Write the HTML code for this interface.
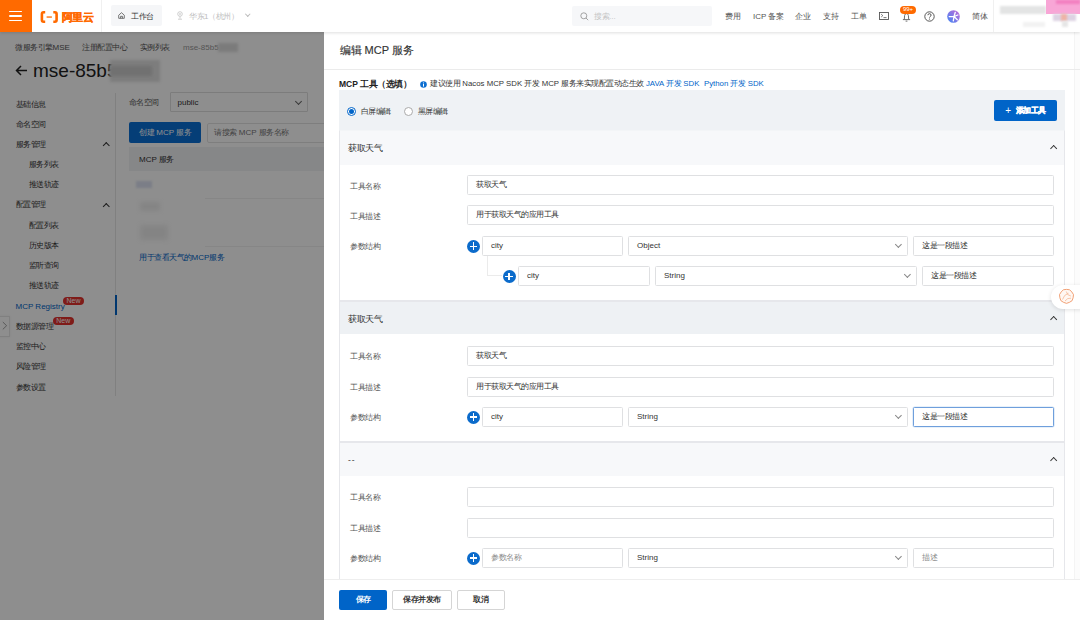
<!DOCTYPE html>
<html><head><meta charset="utf-8">
<style>
*{box-sizing:border-box;margin:0;padding:0}
html,body{width:1080px;height:620px;overflow:hidden;background:#fff;font-family:"Liberation Sans",sans-serif;color:#333;font-size:8px;line-height:1}
.a{position:absolute;white-space:nowrap}
.c{letter-spacing:-0.5px}
.nols .c{letter-spacing:0}
/* header */
#hdr{position:absolute;left:0;top:0;width:1080px;height:32px;background:#fff;box-shadow:0 1px 3px rgba(0,0,0,0.13);z-index:5}
.hm{position:absolute;left:0;top:0;width:32px;height:32px;background:#ff6a00}
.hm i{position:absolute;left:9px;width:13px;height:1.6px;background:#fff;border-radius:1px}
.ht{font-size:8px;color:#555}
/* page */
#page{position:absolute;left:0;top:32px;width:1080px;height:588px;background:#fff}
.side{font-size:8px;color:#333}
#mask{position:absolute;left:0;top:32px;width:1080px;height:588px;background:rgba(0,0,0,0.445);z-index:3}
#drawer{position:absolute;left:324px;top:32px;width:756px;height:588px;background:#fff;z-index:4}
.inp{position:absolute;height:20px;border:1px solid #dfe0e2;border-radius:1.5px;background:#fff;font-size:8px;color:#333;line-height:18.8px;padding-left:8px;white-space:nowrap}
.lbl{position:absolute;font-size:8px;color:#555;white-space:nowrap}
.plus{position:absolute;width:13px;height:13px;border-radius:50%;background:#0b6bcb}
.plus:before{content:"";position:absolute;left:2.7px;top:5.75px;width:7.6px;height:1.5px;background:#fff}
.plus:after{content:"";position:absolute;left:5.75px;top:2.7px;width:1.5px;height:7.6px;background:#fff}
.chev{position:absolute;width:5px;height:5px;border-right:1px solid #666;border-bottom:1px solid #666;transform:rotate(45deg)}
.chup{position:absolute;width:6px;height:6px;border-left:1.3px solid #333;border-top:1.3px solid #333;transform:rotate(45deg)}
.card{position:absolute;left:339px;width:726px;border:1px solid #e6e7eb;background:#fff}
.ch{position:absolute;left:0;top:0;width:100%;height:33px;background:#f6f7f9}
.btn{position:absolute;height:20px;border-radius:2px;font-size:8px;font-weight:bold;text-align:center;line-height:20px}
</style></head><body>

<div id="hdr">
  <div class="hm"><i style="top:10.5px"></i><i style="top:15.2px"></i><i style="top:19.9px"></i></div>
  <svg class="a" style="left:40px;top:10.5px" width="20" height="12" viewBox="0 0 20 12">
    <path d="M5.2 1.3 H3.6 Q1.9 1.3 1.9 3 V9 Q1.9 10.7 3.6 10.7 H5.2" fill="none" stroke="#ff6a00" stroke-width="2.6"/>
    <path d="M13.3 1.3 H14.9 Q16.6 1.3 16.6 3 V9 Q16.6 10.7 14.9 10.7 H13.3" fill="none" stroke="#ff6a00" stroke-width="2.6"/>
    <rect x="6.6" y="5.4" width="5.3" height="1.3" fill="#ff6a00"/>
  </svg>
  <div class="a" style="left:61.5px;top:9.5px;font-size:11px;font-weight:bold;color:#ff6a00;line-height:14px;-webkit-text-stroke:0.35px #ff6a00"><span class="c">阿里云</span></div>
  <div class="a" style="left:101px;top:0;width:1px;height:32px;background:#f0f0f0"></div>
  <div class="a" style="left:110.5px;top:5px;width:51px;height:20.5px;background:#f5f6f8;border-radius:2px"></div>
  <svg class="a" style="left:118px;top:12px" width="7" height="7" viewBox="0 0 7 7"><path d="M0.7 3.2 L3.5 0.7 L6.3 3.2 V6.3 H0.7 Z" fill="none" stroke="#555" stroke-width="0.8"/><path d="M2.6 6.3 V4.3 H4.4 V6.3" fill="none" stroke="#555" stroke-width="0.8"/></svg>
  <div class="a ht" style="left:131px;top:11.5px;color:#333;line-height:10px"><span class="c">工作台</span></div>
  <svg class="a" style="left:177px;top:11px" width="6" height="9" viewBox="0 0 6 9"><circle cx="3" cy="3" r="2.3" fill="none" stroke="#bbb" stroke-width="0.7"/><circle cx="3" cy="3" r="0.8" fill="#bbb"/><path d="M3 5.4 V7.6 M1 8.2 H5" stroke="#bbb" stroke-width="0.7"/></svg>
  <div class="a ht" style="left:189px;top:11.5px;color:#bdbdbd;line-height:10px"><span class="c">华东</span>1<span class="c">（杭州）</span></div>
  <div class="chev" style="left:246px;top:12px;width:3.5px;height:3.5px;border-color:#bbb"></div>
  <div class="a" style="left:572px;top:5.5px;width:140px;height:20.5px;background:#f6f7f9;border-radius:2px"></div>
  <svg class="a" style="left:580px;top:12px" width="9" height="9" viewBox="0 0 9 9"><circle cx="3.8" cy="3.8" r="3" fill="none" stroke="#999" stroke-width="0.9"/><path d="M6 6 L8.2 8.2" stroke="#999" stroke-width="0.9"/></svg>
  <div class="a ht" style="left:594px;top:11.5px;color:#c4c4c4;line-height:10px"><span class="c">搜索</span>...</div>
  <div class="a ht" style="left:725px;top:11.5px;line-height:10px"><span class="c">费用</span></div>
  <div class="a ht" style="left:753px;top:11.5px;line-height:10px">ICP <span class="c">备案</span></div>
  <div class="a ht" style="left:795px;top:11.5px;line-height:10px"><span class="c">企业</span></div>
  <div class="a ht" style="left:823px;top:11.5px;line-height:10px"><span class="c">支持</span></div>
  <div class="a ht" style="left:851px;top:11.5px;line-height:10px"><span class="c">工单</span></div>
  <svg class="a" style="left:879px;top:12px" width="10" height="8" viewBox="0 0 10 8"><rect x="0.5" y="0.5" width="9" height="7" fill="none" stroke="#555" stroke-width="0.9"/><path d="M2.2 2.2 L3.8 3.6 L2.2 5" fill="none" stroke="#555" stroke-width="0.8"/><path d="M4.5 5.6 H7.5" stroke="#555" stroke-width="0.8"/></svg>
  <svg class="a" style="left:902px;top:12px" width="9" height="10" viewBox="0 0 9 10"><path d="M2.3 7.4 L2.6 3.6 Q2.8 1.6 4.5 1.6 Q6.2 1.6 6.4 3.6 L6.7 7.4 M0.9 7.6 H8.1 M3.6 9.1 H5.4" fill="none" stroke="#555" stroke-width="0.85"/></svg>
  <div class="a" style="left:900px;top:6px;width:16px;height:7.5px;border-radius:4px;background:#ff6a00;color:#fff;font-size:6px;line-height:7.5px;text-align:center">99+</div>
  <svg class="a" style="left:923.5px;top:10.5px" width="11" height="11" viewBox="0 0 11 11"><circle cx="5.5" cy="5.5" r="4.7" fill="none" stroke="#444" stroke-width="0.9"/><path d="M3.9 4.2 Q3.9 2.7 5.5 2.7 Q7.1 2.7 7.1 4.1 Q7.1 5 6 5.6 Q5.5 5.9 5.5 6.6" fill="none" stroke="#444" stroke-width="0.9"/><circle cx="5.5" cy="8" r="0.6" fill="#444"/></svg>
  <svg class="a" style="left:946.5px;top:9.5px" width="13" height="13" viewBox="0 0 13 13"><defs><linearGradient id="av" x1="0" y1="1" x2="1" y2="0"><stop offset="0" stop-color="#3f86f5"/><stop offset="1" stop-color="#c86ad6"/></linearGradient></defs><circle cx="6.5" cy="6.5" r="6.3" fill="url(#av)"/><path d="M7 6.5 L2.2 6.6 M7 6.5 L8.3 2.3 M7 6.5 L10.9 5 M7 6.5 L10.3 9.8 M7 6.5 L6.3 10.9" stroke="#fff" stroke-width="1.3" stroke-linecap="round"/></svg>
  <div class="a ht" style="left:972px;top:11.5px;line-height:10px"><span class="c">简体</span></div>
  <div class="a" style="left:993px;top:0;width:1px;height:32px;background:#f0f0f0"></div>
  <div class="a" style="left:1000px;top:6px;width:46px;height:8px;background:#e3e4e4;filter:blur(0.8px)"></div>
  <div class="a" style="left:1046px;top:0;width:34px;height:14px;background:#f8a6d6;filter:blur(0.6px)"></div>
  <div class="a" style="left:1056px;top:0;width:24px;height:4px;background:#f27fc0;filter:blur(1px)"></div>
  <div class="a" style="left:1053px;top:14px;width:23px;height:7px;background:#ddd3e3;filter:blur(0.8px)"></div>
  <div class="a" style="left:1061px;top:14px;width:6px;height:7px;background:#eeb3a6;filter:blur(1px)"></div>
  <div class="a" style="left:1062px;top:21px;width:6px;height:6px;background:#e6e6e6;filter:blur(0.8px)"></div>
  <div class="a" style="left:1023px;top:22px;width:22px;height:5px;background:#f2f2f2;filter:blur(0.8px)"></div>
</div>

<div id="page">
  <div class="a side" style="left:15px;top:10.8px;line-height:10px;color:#555"><span class="c">微服务引擎</span>MSE</div>
  <div class="a side" style="left:82px;top:10.8px;line-height:10px;color:#555"><span class="c">注册配置中心</span></div>
  <div class="a side" style="left:139.5px;top:10.8px;line-height:10px;color:#555"><span class="c">实例列表</span></div>
  <div class="a side" style="left:183px;top:10.8px;line-height:10px;color:#999">mse-85b5</div>
  <div class="a" style="left:218px;top:11px;width:20px;height:9px;background:#ddd;filter:blur(1.5px)"></div>
  <svg class="a" style="left:15px;top:32px" width="13" height="13" viewBox="0 0 13 13"><path d="M12 6.5 H1.5 M6 2 L1.5 6.5 L6 11" fill="none" stroke="#222" stroke-width="1.5"/></svg>
  <div class="a" style="left:33px;top:27.5px;font-size:19px;line-height:22px;color:#222">mse-85b5</div>
  <div class="a" style="left:110px;top:28px;width:50px;height:22px;background:#e0e0e0;filter:blur(1.5px)"></div>
  <div class="a" style="left:110px;top:34px;width:42px;height:10px;background:#cbcbcb;filter:blur(1.5px)"></div>

  <div class="a side" style="left:15.5px;top:67.8px;line-height:10px"><span class="c">基础信息</span></div>
  <div class="a side" style="left:15.5px;top:87.8px;line-height:10px"><span class="c">命名空间</span></div>
  <div class="a side" style="left:15.5px;top:107.8px;line-height:10px"><span class="c">服务管理</span></div>
  <div class="chup" style="left:103.5px;top:110.8px;width:4.5px;height:4.5px;border-width:1px;border-color:#333"></div>
  <div class="a side" style="left:28.5px;top:127.8px;line-height:10px"><span class="c">服务列表</span></div>
  <div class="a side" style="left:28.5px;top:147.8px;line-height:10px"><span class="c">推送轨迹</span></div>
  <div class="a side" style="left:15.5px;top:168.3px;line-height:10px"><span class="c">配置管理</span></div>
  <div class="chup" style="left:103.5px;top:171.8px;width:4.5px;height:4.5px;border-width:1px;border-color:#333"></div>
  <div class="a side" style="left:28.5px;top:188.8px;line-height:10px"><span class="c">配置列表</span></div>
  <div class="a side" style="left:28.5px;top:208.8px;line-height:10px"><span class="c">历史版本</span></div>
  <div class="a side" style="left:28.5px;top:228.8px;line-height:10px"><span class="c">监听查询</span></div>
  <div class="a side" style="left:28.5px;top:248.8px;line-height:10px"><span class="c">推送轨迹</span></div>
  <div class="a side" style="left:15.5px;top:269.8px;line-height:10px;color:#0064c8">MCP Registry</div>
  <div class="a" style="left:63px;top:264.5px;width:21px;height:8.5px;border-radius:4.5px;background:#e5322d;color:#fff;font-size:7px;line-height:8.5px;text-align:center">New</div>
  <div class="a side" style="left:15.5px;top:290.3px;line-height:10px"><span class="c">数据源管理</span></div>
  <div class="a" style="left:53px;top:284.5px;width:20.5px;height:8.5px;border-radius:4.5px;background:#e5322d;color:#fff;font-size:7px;line-height:8.5px;text-align:center">New</div>
  <div class="a side" style="left:15.5px;top:310.3px;line-height:10px"><span class="c">监控中心</span></div>
  <div class="a side" style="left:15.5px;top:330.3px;line-height:10px"><span class="c">风险管理</span></div>
  <div class="a side" style="left:15.5px;top:350.8px;line-height:10px"><span class="c">参数设置</span></div>
  <div class="a" style="left:115px;top:61px;width:1px;height:303px;background:#e6e6e6"></div>
  <div class="a" style="left:114.5px;top:262.5px;width:2px;height:20.5px;background:#0064c8"></div>
  <div class="a" style="left:-1px;top:283.5px;width:10.7px;height:21px;border:1px solid #e6e6e6;background:#fff;box-shadow:0 0 2px rgba(0,0,0,0.08)"></div>
  <svg class="a" style="left:0;top:284px" width="10" height="20" viewBox="0 0 10 20"><path d="M2.8 6 L6.6 9.7 L2.8 13.4" fill="none" stroke="#888" stroke-width="0.8"/></svg>

  <div class="a side" style="left:128.5px;top:65.5px;line-height:10px;color:#555"><span class="c">命名空间</span></div>
  <div class="a" style="left:169.5px;top:60px;width:138px;height:20px;border:1px solid #dedede;border-radius:1px"></div>
  <div class="a side" style="left:177.5px;top:65.5px;line-height:10px">public</div>
  <div class="chev" style="left:296px;top:66.5px;width:5px;height:5px;border-color:#666;border-width:0.8px"></div>
  <div class="a" style="left:129px;top:90px;width:72px;height:20.5px;background:#0a6fd6;border-radius:2px"></div>
  <div class="a side" style="left:139px;top:95.5px;line-height:10px;color:#fff"><span class="c">创建</span> MCP <span class="c">服务</span></div>
  <div class="a" style="left:206.5px;top:90.5px;width:130px;height:20px;border:1px solid #e3e3e3;border-radius:2px"></div>
  <div class="a side" style="left:214px;top:95.5px;line-height:10px;color:#777"><span class="c">请搜索</span> MCP <span class="c">服务名称</span></div>
  <div class="a" style="left:129px;top:115px;width:200px;height:23.5px;background:#f0f2f5"></div>
  <div class="a side" style="left:139px;top:123px;line-height:10px;color:#333">MCP <span class="c">服务</span></div>
  <div class="a" style="left:136px;top:149px;width:16px;height:7px;background:#dde3f3;filter:blur(1.2px)"></div>
  <div class="a" style="left:140px;top:170px;width:20px;height:9px;background:#eee;filter:blur(2px)"></div>
  <div class="a" style="left:140px;top:193px;width:28px;height:15px;background:#eee;filter:blur(2.5px)"></div>
  <div class="a" style="left:205px;top:165.5px;width:124px;height:1px;background:#f0f0f0"></div>
  <div class="a" style="left:205px;top:213.5px;width:124px;height:1px;background:#f0f0f0"></div>
  <div class="a side" style="left:139px;top:220.5px;line-height:10px;color:#0064c8"><span class="c">用于查看天气的</span>MCP<span class="c">服务</span></div>
</div>
<div id="mask"></div>
<div id="drawer">
<div class="a" style="left:750px;top:0;width:6px;height:548px;background:#fcfcfc;border-left:1px solid #f4f4f4"></div>
<div class="a" style="left:0;top:0;width:756px;height:37.5px;border-bottom:1px solid #ebebeb"></div>
<div class="a nols" style="left:15.5px;top:11px;font-size:11px;line-height:14px;color:#333;-webkit-text-stroke:0.15px #333"><span class="c">编辑</span> MCP <span class="c">服务</span></div>
<div class="a" style="left:15px;top:47px;font-size:8.5px;line-height:10px;font-weight:bold;color:#222">MCP <span class="c">工具（选填）</span></div>
<svg class="a" style="left:95.5px;top:49.3px" width="7" height="7" viewBox="0 0 7 7"><circle cx="3.5" cy="3.5" r="3.3" fill="#0d6fd0"/><rect x="3" y="1.5" width="1" height="0.9" fill="#fff"/><rect x="3" y="3" width="1" height="2.6" fill="#fff"/></svg>
<div class="a" style="left:106px;top:47px;line-height:10px;color:#333;font-size:7.8px;word-spacing:0.1px"><span class="c">建议使用</span> Nacos MCP SDK <span class="c">开发</span> MCP <span class="c">服务来实现配置动态生效</span> <span style="color:#0064c8">JAVA <span class="c">开发</span> SDK</span>&nbsp; <span style="color:#0064c8">Python <span class="c">开发</span> SDK</span></div>
<div class="a" style="left:15px;top:58px;width:726px;height:490px;background:#eff2f5"></div>
<div class="a" style="left:22.5px;top:74.6px;width:9.2px;height:9.2px;border-radius:50%;border:1px solid #0064c8;background:#fff"></div>
<div class="a" style="left:24.6px;top:76.7px;width:5px;height:5px;border-radius:50%;background:#0064c8"></div>
<div class="lbl" style="left:36.5px;top:75px;line-height:10px;color:#333"><span class="c">白屏编辑</span></div>
<div class="a" style="left:79.5px;top:74.6px;width:9.2px;height:9.2px;border-radius:50%;border:1px solid #aaa;background:#fff"></div>
<div class="lbl" style="left:93.5px;top:75px;line-height:10px;color:#333"><span class="c">黑屏编辑</span></div>
<div class="btn" style="left:670px;top:68px;width:63px;height:20.5px;background:#0064c8;color:#fff"><span style="font-weight:normal;font-size:10px;position:relative;top:0.5px">+</span>&nbsp; <span style="-webkit-text-stroke:0.25px #fff"><span class="c">添加工具</span></span></div>
<div class="card" style="left:15px;top:98px;width:726px;height:171px;border-top-color:#f3f5f7"><div class="ch" style="background:#f7f8fa;height:34px"></div></div><div class="a" style="left:24px;top:110.8px;font-size:8.5px;line-height:11px;color:#333"><span class="c">获取天气</span></div><div class="chup" style="left:726.5px;top:114px;width:5.3px;height:5.3px;border-width:1.05px"></div>
<div class="lbl" style="left:26px;top:149.8px;line-height:10px"><span class="c">工具名称</span></div>
<div class="inp" style="left:143px;top:143px;width:587px;height:20px;color:#333;"><span class="c">获取天气</span></div>
<div class="lbl" style="left:26px;top:179.8px;line-height:10px"><span class="c">工具描述</span></div>
<div class="inp" style="left:143px;top:173px;width:587px;height:20px;color:#333;"><span class="c">用于获取天气的应用工具</span></div>
<div class="lbl" style="left:26px;top:210.3px;line-height:10px"><span class="c">参数结构</span></div>
<div class="plus" style="left:143.2px;top:207.8px"></div>
<div class="inp" style="left:158px;top:203.5px;width:141px;height:20.0px;color:#333;">city</div>
<div class="inp" style="left:304px;top:203.5px;width:279.5px;height:20.0px;color:#333;">Object</div><div class="chev" style="left:572.0px;top:209.5px;width:4.8px;height:4.8px;border-color:#8a8a8a;border-width:0.9px"></div>
<div class="inp" style="left:589px;top:203.5px;width:141px;height:20.0px;color:#333;"><span class="c">这是一段描述</span></div>
<div class="a" style="left:163px;top:223.5px;width:15px;height:20px;border-left:1px solid #ebebeb;border-bottom:1px solid #ebebeb"></div>
<div class="plus" style="left:178.5px;top:238px"></div>
<div class="inp" style="left:194px;top:234px;width:132px;height:20px;color:#333;">city</div>
<div class="inp" style="left:331px;top:234px;width:261.5px;height:20px;color:#333;">String</div><div class="chev" style="left:581.0px;top:240.0px;width:4.8px;height:4.8px;border-color:#8a8a8a;border-width:0.9px"></div>
<div class="inp" style="left:598px;top:234px;width:132px;height:20px;color:#333;"><span class="c">这是一段描述</span></div>
<div class="card" style="left:15px;top:269px;width:726px;height:141px"><div class="ch" style="background:#eef1f4;height:32px"></div></div><div class="a" style="left:24px;top:281.8px;font-size:8.5px;line-height:11px;color:#333"><span class="c">获取天气</span></div><div class="chup" style="left:726.5px;top:285px;width:5.3px;height:5.3px;border-width:1.05px"></div>
<div class="lbl" style="left:26px;top:320.3px;line-height:10px"><span class="c">工具名称</span></div>
<div class="inp" style="left:143px;top:314px;width:587px;height:20px;color:#333;"><span class="c">获取天气</span></div>
<div class="lbl" style="left:26px;top:350.8px;line-height:10px"><span class="c">工具描述</span></div>
<div class="inp" style="left:143px;top:344.5px;width:587px;height:20.0px;color:#333;"><span class="c">用于获取天气的应用工具</span></div>
<div class="lbl" style="left:26px;top:381.3px;line-height:10px"><span class="c">参数结构</span></div>
<div class="plus" style="left:143.2px;top:378.5px"></div>
<div class="inp" style="left:158px;top:374.5px;width:141px;height:20.0px;color:#333;">city</div>
<div class="inp" style="left:304px;top:374.5px;width:279.5px;height:20.0px;color:#333;">String</div><div class="chev" style="left:572.0px;top:380.5px;width:4.8px;height:4.8px;border-color:#8a8a8a;border-width:0.9px"></div>
<div class="inp" style="left:589px;top:374.5px;width:141px;height:20.0px;color:#333;border-color:#6f9fdc;box-shadow:0 0 0 0.6px rgba(0,100,200,0.18)"><span class="c">这是一段描述</span></div>
<div class="card" style="left:15px;top:410px;width:726px;height:158px"><div class="ch" style="background:#f7f8fa;height:33px"></div></div><div class="a" style="left:24px;top:422.8px;font-size:8.5px;line-height:11px;color:#444;letter-spacing:0.8px">--</div><div class="chup" style="left:726.5px;top:426px;width:5.3px;height:5.3px;border-width:1.05px"></div>
<div class="lbl" style="left:26px;top:461.3px;line-height:10px"><span class="c">工具名称</span></div>
<div class="inp" style="left:143px;top:455px;width:587px;height:20px;color:#333;"></div>
<div class="lbl" style="left:26px;top:491.8px;line-height:10px"><span class="c">工具描述</span></div>
<div class="inp" style="left:143px;top:485.5px;width:587px;height:20.0px;color:#333;"></div>
<div class="lbl" style="left:26px;top:522.3px;line-height:10px"><span class="c">参数结构</span></div>
<div class="plus" style="left:143.2px;top:519.5px"></div>
<div class="inp" style="left:158px;top:516px;width:141px;height:20px;color:#888;"><span class="c">参数名称</span></div>
<div class="inp" style="left:304px;top:516px;width:279.5px;height:20px;color:#333;">String</div><div class="chev" style="left:572.0px;top:522.0px;width:4.8px;height:4.8px;border-color:#8a8a8a;border-width:0.9px"></div>
<div class="inp" style="left:589px;top:516px;width:141px;height:20px;color:#888;"><span class="c">描述</span></div>
<div class="a" style="left:0;top:547px;width:756px;height:41px;background:#fff;border-top:1px solid #eeeeee"></div>
<div class="btn" style="left:15px;top:558px;width:48px;background:#0064c8;color:#fff"><span class="c">保存</span></div>
<div class="btn" style="left:68px;top:558px;width:60px;border:1px solid #d5d5d5;background:#fff;color:#333;line-height:18px"><span class="c">保存并发布</span></div>
<div class="btn" style="left:132.5px;top:558px;width:48px;border:1px solid #d5d5d5;background:#fff;color:#333;line-height:18px"><span class="c">取消</span></div>
<div class="a" style="left:727px;top:253px;width:40px;height:24px;border-radius:12px;background:#fff;box-shadow:0 1px 4px rgba(0,0,0,0.12)"></div>
<svg class="a" style="left:734px;top:256px" width="17" height="17" viewBox="0 0 17 17"><path d="M8.50 1.40 Q12.06 0.80 13.82 3.96 Q16.50 6.37 15.13 9.71 Q14.92 13.32 11.45 14.33 Q8.50 16.41 5.55 14.33 Q2.08 13.32 1.87 9.71 Q0.50 6.37 3.18 3.96 Q4.94 0.80 8.50 1.40 Z" fill="#fff7f2" stroke="#ee8a55" stroke-width="0.8"/><path d="M4.5 11.5 Q6 6.5 10.5 5.2 M7 13 Q9.5 9.5 13 10.2 M8.3 3.5 Q9 7.5 12.8 8" fill="none" stroke="#f4b08a" stroke-width="0.7"/></svg>
</div>

</body></html>
